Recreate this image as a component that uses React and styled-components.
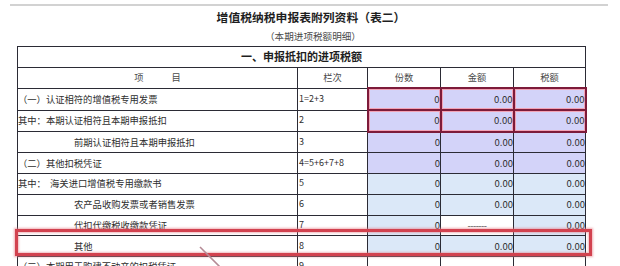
import styled, { createGlobalStyle } from "styled-components";

const GlobalStyle = createGlobalStyle`
    body {
        margin: 0;
        background: #ffffff;
        font-family: "Noto Sans CJK SC", "Noto Sans", sans-serif;
        color: #2e2e2e;
    }
`;

const rows = [
    { item: "（一）认证相符的增值税专用发票", pad: 0, no: "1=2+3", tone: "violet", flag: true },
    { item: "其中：本期认证相符且本期申报抵扣", pad: 0, no: "2", tone: "violet", flag: true },
    { item: "前期认证相符且本期申报抵扣", pad: 56, no: "3", tone: "violet" },
    { item: "（二）其他扣税凭证", pad: 0, no: "4=5+6+7+8", tone: "violet" },
    { item: "其中：  海关进口增值税专用缴款书", pad: 0, no: "5", tone: "blue" },
    { item: "农产品收购发票或者销售发票", pad: 56, no: "6", tone: "blue" },
    { item: "代扣代缴税收缴款凭证", pad: 56, no: "7", tone: "blue", noAmount: true },
    { item: "其他", pad: 56, no: "8", tone: "blue" },
    { item: "（三）本期用于购建不动产的扣税凭证", pad: 0, no: "9", tone: "none", dashes: true },
];

export default function App() {
    return (
        <Page>
            <GlobalStyle />
            <Rule />
            <Title>增值税纳税申报表附列资料（表二）</Title>
            <Subtitle>（本期进项税额明细）</Subtitle>
            <TableWrap>
                <Table>
                    <colgroup>
                        <col style={{ width: 280 }} />
                        <col style={{ width: 70 }} />
                        <col style={{ width: 73 }} />
                        <col style={{ width: 73 }} />
                        <col style={{ width: 72 }} />
                    </colgroup>
                    <tbody>
                        <tr>
                            <Section colSpan={5}>一、申报抵扣的进项税额</Section>
                        </tr>
                        <tr>
                            <Head>项　　　目</Head>
                            <Head>栏次</Head>
                            <Head>份数</Head>
                            <Head>金额</Head>
                            <Head>税额</Head>
                        </tr>
                        {rows.map((r) => (
                            <tr key={r.no}>
                                <Item $pad={r.pad}>{r.item}</Item>
                                <No>{r.no}</No>
                                {r.dashes ? (
                                    <>
                                        <Dash>------</Dash>
                                        <Dash>------</Dash>
                                        <Dash>------</Dash>
                                    </>
                                ) : (
                                    <>
                                        <Value $tone={r.tone} $flag={r.flag}>0</Value>
                                        {r.noAmount ? (
                                            <Dash>-------</Dash>
                                        ) : (
                                            <Value $tone={r.tone} $flag={r.flag}>0.00</Value>
                                        )}
                                        <Value $tone={r.tone} $flag={r.flag}>0.00</Value>
                                    </>
                                )}
                            </tr>
                        ))}
                    </tbody>
                </Table>
                <Highlight />
            </TableWrap>
            <Arrow width="40" height="30" viewBox="0 0 40 30">
                <line x1="2" y1="2" x2="24" y2="24" stroke="#b58a95" strokeWidth="1.6" />
            </Arrow>
        </Page>
    );
}

const Page = styled.div`
    position: relative;
    width: 620px;
    height: 266px;
    overflow: hidden;
    padding-top: 4px;
    box-sizing: border-box;
`;

const Rule = styled.div`
    height: 2px;
    margin: 0 12px 0 10px;
    background: #d2d2d2;
`;

const Title = styled.h1`
    margin: 3px 0 0 0;
    text-align: center;
    font-size: 11.8px;
    line-height: 16px;
    font-weight: 700;
    color: #1e1e1e;
    padding-left: 2px;
`;

const Subtitle = styled.div`
    margin-top: 4px;
    text-align: center;
    font-size: 9.6px;
    line-height: 14px;
    color: #4a4a4a;
    padding-left: 6px;
`;

const TableWrap = styled.div`
    position: relative;
    margin: 3px 0 0 17px;
    width: 568px;
`;

const Table = styled.table`
    border-collapse: collapse;
    table-layout: fixed;
    width: 568px;
    font-size: 9.3px;

    td {
        height: 18.7px;
        padding: 0 0 1px 0;
        border: 1px solid #2b2b35;
        line-height: 14px;
        white-space: pre;
        overflow: hidden;
    }
`;

const Section = styled.td`
    text-align: center;
    font-weight: 700;
    font-size: 11px;
    color: #1e1e1e;
`;

const Head = styled.td`
    text-align: center;
    color: #4a4a4a;
`;

const Item = styled.td`
    padding-left: ${(p) => p.$pad}px !important;
    color: #2e2e2e;
`;

const No = styled.td`
    font-size: 9px;
    color: #2e2e2e;
    padding-left: 1px !important;
`;

const tones = {
    violet: "#d3d3f9",
    blue: "#dbe8f8",
    none: "#ffffff",
};

const Value = styled.td`
    text-align: right;
    font-size: 9.5px;
    color: #2e2e2e;
    background: ${(p) => tones[p.$tone]};
    ${(p) =>
        p.$flag &&
        `
        border: 2px solid #7d1b3a !important;
        box-shadow: inset 0 0 0 1px #f2a3b6;
    `}
`;

const Dash = styled.td`
    text-align: center;
    color: #4a4a4a;
    background: #ffffff;
    letter-spacing: -0.5px;
`;

const Highlight = styled.div`
    position: absolute;
    left: -2px;
    top: 183px;
    width: 571px;
    height: 21px;
    border: 3px solid #d2424f;
    box-shadow: 0 0 2px 1px rgba(230, 120, 130, 0.6), inset 0 0 2px 1px rgba(230, 120, 130, 0.5);
    pointer-events: none;
`;

const Arrow = styled.svg`
    position: absolute;
    left: 198px;
    top: 245px;
`;
